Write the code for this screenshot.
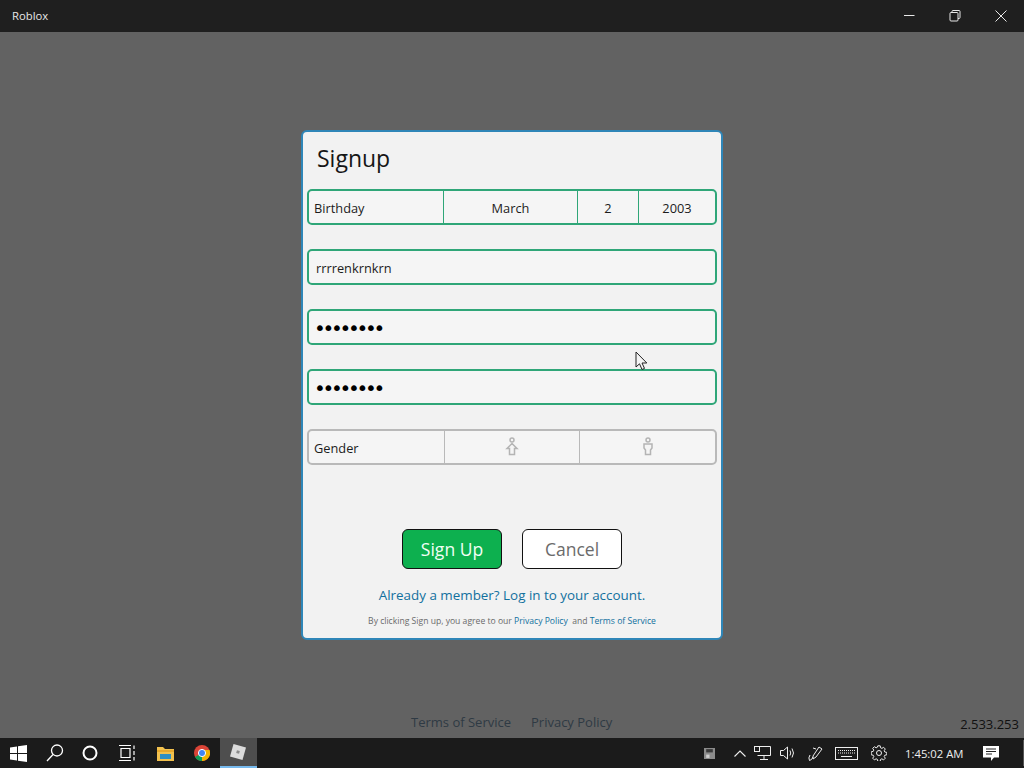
<script>
</script>

<div class="screen">
  <header class="titlebar">
    <span class="app-name">Roblox</span>
    <div class="win-controls">
      <button class="win-btn" aria-label="Minimize">
        <svg width="12" height="12" viewBox="0 0 12 12"><path d="M1 5.5h10.5" stroke="#e8e8e8" fill="none"/></svg>
      </button>
      <button class="win-btn" aria-label="Restore">
        <svg width="12" height="12" viewBox="0 0 12 12"><rect x="1" y="2.5" width="8" height="8.5" rx="1" stroke="#e8e8e8" fill="none"/><path d="M3 2.5V1.5q0-1 1-1h6q1 0 1 1v6q0 1-1 1H9" stroke="#e8e8e8" fill="none"/></svg>
      </button>
      <button class="win-btn" aria-label="Close">
        <svg width="12" height="12" viewBox="0 0 12 12"><path d="M.5.5l11 11M11.500.5l-11 11" stroke="#e8e8e8" fill="none"/></svg>
      </button>
    </div>
  </header>

  <main class="stage">
    <section class="modal">
      <h1>Signup</h1>
      <div class="form">
        <div class="field seg green">
          <div class="label">Birthday</div>
          <div class="cell month">March</div>
          <div class="cell day">2</div>
          <div class="cell year">2003</div>
        </div>
        <div class="field green input">rrrrenkrnkrn</div>
        <div class="field green input dots">••••••••</div>
        <div class="field green input dots">••••••••</div>
        <div class="field seg grey">
          <div class="label gender">Gender</div>
          <div class="cell g1">
            <svg width="14" height="20" viewBox="0 0 14 20" fill="none" stroke="#b4b4b4" stroke-width="1.500"><circle cx="7" cy="3" r="2"/><path d="M7 6.500L12 11.500H9.500V17.500H4.500V11.500H2Z"/></svg>
          </div>
          <div class="cell g2">
            <svg width="14" height="20" viewBox="0 0 14 20" fill="none" stroke="#b4b4b4" stroke-width="1.500"><circle cx="7" cy="3" r="2"/><path d="M3 7H11V11L9.500 13V17.500H4.500V13L3 11Z"/></svg>
          </div>
        </div>
      </div>
      <div class="actions">
        <button class="btn primary">Sign Up</button>
        <button class="btn secondary">Cancel</button>
      </div>
      <a class="member" href="#top">Already a member? Log in to your account.</a>
      <p class="legal">By clicking Sign up, you agree to our <a href="#top">Privacy Policy</a>&nbsp; and <a href="#top">Terms of Service</a></p>
    </section>
    <nav class="foot-links">
      <a href="#top">Terms of Service</a>
      <a href="#top">Privacy Policy</a>
    </nav>
    <span class="version">2.533.253</span>
    <svg class="cursor" width="13" height="20" viewBox="0 0 13 20"><path d="M1 1V16L4.500 12.800L7 18.500L9.500 17.400L7 12H11.800Z" fill="#f4f4f4" stroke="#222" stroke-width="1"/></svg>
  </main>

  <footer class="taskbar">
    <div class="task-left">
      <div class="task-item">
        <svg width="17" height="17" viewBox="0 0 17 17" fill="#fff"><path d="M0 2.500L7 1.500V8H0ZM8 1.300L17 0V8H8ZM0 9H7V15.500L0 14.500ZM8 9H17V17L8 15.700Z"/></svg>
      </div>
      <div class="task-item">
        <svg width="18" height="18" viewBox="0 0 18 18" fill="none" stroke="#fff" stroke-width="1.300"><circle cx="11" cy="6.500" r="5.500"/><path d="M7 10.500L1 17"/></svg>
      </div>
      <div class="task-item cortana">
        <svg width="16" height="16" viewBox="0 0 16 16" fill="none" stroke="#fff" stroke-width="2"><circle cx="8" cy="8" r="6.500"/></svg>
      </div>
      <div class="task-item">
        <svg width="18" height="16" viewBox="0 0 18 16" fill="none" stroke="#fff" stroke-width="1.200"><path d="M0 .5H12M0 15.500H12M2 3.500H11V12.500H2ZM15 .5V4M15 6V10M15 12V15.500" /></svg>
      </div>
      <div class="task-item">
        <svg width="17" height="15" viewBox="0 0 17 15"><path d="M0 1H6L8 3H17V15H0Z" fill="#f2c14e"/><path d="M0 4H17V6H0Z" fill="#e8a92d"/><rect x="3" y="8" width="11" height="5" fill="#2f8fc4"/></svg>
      </div>
      <div class="task-item">
        <svg width="16" height="16" viewBox="0 0 16 16"><circle cx="8" cy="8" r="8" fill="#db4437"/><path d="M8 8L1 12A8 8 0 0 0 8 16Z" fill="#0f9d58"/><path d="M8 8L8 16A8 8 0 0 0 15.500 5H8Z" fill="#f4b400"/><circle cx="8" cy="8" r="3.600" fill="#4285f4" stroke="#fff" stroke-width="1"/></svg>
      </div>
      <div class="task-item active">
        <svg width="16" height="16" viewBox="0 0 16 16"><path d="M3.500 0L16 3.500L12.500 16L0 12.500Z" fill="#dcdcdc"/><rect x="6.500" y="6.500" width="3" height="3" fill="#8a8a8a" transform="rotate(15 8 8)"/></svg>
      </div>
    </div>
    <div class="tray">
      <svg class="t-a" width="11" height="11" viewBox="0 0 10 10"><rect x="0" y="0" width="10" height="10" fill="#8c8c8c"/><rect x="2" y="1" width="6" height="3" fill="#3a3a3a"/><rect x="2" y="6" width="3" height="3" fill="#d0d0d0"/></svg>
      <svg class="t-b" width="12" height="7" viewBox="0 0 12 7" fill="none" stroke="#eee" stroke-width="1.100"><path d="M.5 6.500L6 1L11.500 6.500"/></svg>
      <svg class="t-c" width="17" height="14" viewBox="0 0 17 14" fill="none" stroke="#eee"><path d="M3.500.5H16.500V9.500H3.500M10 9.500V13.500M6 13.500H14"/><rect x=".5" y=".5" width="5" height="5" fill="#1c1c1c"/></svg>
      <svg class="t-d" width="16" height="14" viewBox="0 0 16 14" fill="none" stroke="#eee"><path d="M.5 4.500H3.500L7.500 1V13L3.500 9.500H.5ZM10 4.500Q11.500 7 10 9.500M12 2.500Q15 7 12 11.500"/></svg>
      <svg class="t-e" width="17" height="17" viewBox="0 0 17 17" fill="none" stroke="#eee"><path d="M6 11L12 2L15 4L9 12L6 14ZM3 10Q1 13 2.500 15.500Q5 15 6 12M9 4L6 3"/></svg>
      <svg class="t-f" width="23" height="13" viewBox="0 0 23 13" fill="none" stroke="#eee"><rect x=".5" y=".5" width="22" height="12"/><path d="M3 3.500H20M3 6H20" stroke-dasharray="1 1"/><path d="M6 9.500H17"/></svg>
      <svg class="t-g" width="16" height="16" viewBox="0 0 16 16" fill="none" stroke="#eee"><circle cx="8" cy="8" r="2.500"/><path d="M6.800.8h2.400l.4 2 1.300.6 1.700-1.100 1.700 1.700-1.100 1.700.6 1.300 2 .4v2.400l-2 .4-.6 1.300 1.100 1.700-1.700 1.700-1.700-1.100-1.300.6-.4 2H6.800l-.4-2-1.300-.6-1.700 1.100-1.700-1.700 1.100-1.700-.6-1.300-2-.4V6.800l2-.4.6-1.300L1.700 3.400l1.700-1.700 1.700 1.100 1.300-.6Z"/></svg>
      <span class="clock">1:45:02 AM</span>
      <svg class="t-h" width="16" height="15" viewBox="0 0 16 15"><path d="M0 0H16V11.500H11L8 15V11.500H0Z" fill="#fff"/><path d="M3 3H13M3 5.500H13M3 8H9" stroke="#222" fill="none"/></svg>
      <span class="desk-edge"></span>
    </div>
  </footer>
</div>

<style>
  :global(body) {
    margin: 0;
    background: #626262;
  }
  .screen {
    width: 1024px;
    height: 768px;
    display: flex;
    flex-direction: column;
    overflow: hidden;
    font-family: "Open Sans", "Noto Sans", "Liberation Sans", sans-serif;
  }
  .titlebar {
    height: 32px;
    background: #1f1f1f;
    display: flex;
    align-items: center;
    justify-content: space-between;
    padding-left: 12px;
    padding-bottom: 1px;
    box-sizing: border-box;
    flex: none;
  }
  .app-name {
    color: #e6e6e6;
    font-size: 11.300px;
    font-weight: 500;
  }
  .win-controls {
    display: flex;
  }
  .win-btn {
    width: 46px;
    height: 32px;
    padding: 0;
    border: 0;
    background: none;
    display: flex;
    align-items: center;
    justify-content: center;
  }
  .stage {
    position: relative;
    flex: 1;
    display: flex;
    align-items: center;
    justify-content: center;
    background: #626262;
  }
  .modal {
    box-sizing: border-box;
    width: 422px;
    height: 510px;
    padding: 0 4px;
    background: #f2f2f2;
    border: 2px solid #2f86b8;
    border-radius: 6px;
    display: flex;
    flex-direction: column;
    align-items: stretch;
    color: #111;
  }
  h1 {
    margin: 0;
    height: 57px;
    padding-left: 10px;
    font-size: 23px;
    font-weight: 400;
    line-height: 52px;
    color: #161616;
  }
  .form {
    display: flex;
    flex-direction: column;
    gap: 24px;
  }
  .field {
    box-sizing: border-box;
    height: 36px;
    border-radius: 5px;
    background: #f5f5f5;
    font-size: 12.800px;
    color: #1c1c1c;
  }
  .green {
    border: 2px solid #2fa678;
  }
  .grey {
    border: 2px solid #b9b9b9;
  }
  .seg {
    display: flex;
    align-items: stretch;
  }
  .label {
    width: 134px;
    flex: none;
    display: flex;
    align-items: center;
    padding: 2px 0 0 5px;
    box-sizing: border-box;
  }
  .label.gender {
    width: 135px;
  }
  .cell {
    display: flex;
    align-items: center;
    justify-content: center;
    box-sizing: border-box;
    padding-top: 2px;
    border-left: 1px solid #2fa678;
  }
  .grey .cell {
    border-left-color: #b9b9b9;
    padding-top: 0;
  }
  .month {
    width: 134px;
  }
  .day {
    width: 61px;
  }
  .year {
    flex: 1;
  }
  .g1 {
    width: 135px;
  }
  .g2 {
    flex: 1;
  }
  .input {
    display: flex;
    align-items: center;
    padding: 2px 0 0 7px;
  }
  .dots {
    font-size: 20px;
    color: #000;
    letter-spacing: -3.300px;
    padding: 2px 0 0 5px;
    font-family: "DejaVu Sans", sans-serif;
  }
  .actions {
    display: flex;
    justify-content: center;
    gap: 20px;
    margin-top: 64px;
  }
  .btn {
    box-sizing: border-box;
    width: 100px;
    height: 40px;
    border: 1px solid #111;
    border-radius: 6px;
    font-family: inherit;
    font-size: 17.500px;
    padding: 0;
  }
  .primary {
    background: #0db04f;
    color: #f2fff6;
  }
  .secondary {
    background: #fff;
    color: #6b6b6b;
  }
  .member {
    margin-top: 16px;
    text-align: center;
    color: #11709e;
    font-size: 13.400px;
    line-height: 20px;
    text-decoration: none;
  }
  .legal {
    margin: 8px 0 0;
    text-align: center;
    font-size: 8.600px;
    line-height: 16px;
    color: #6a6a6a;
  }
  .legal a {
    color: #11709e;
    text-decoration: none;
  }
  .foot-links {
    position: absolute;
    left: 411px;
    top: 680px;
    display: flex;
    gap: 20px;
  }
  .foot-links a {
    color: #2f3a44;
    font-size: 13px;
    line-height: 20px;
    text-decoration: none;
  }
  .version {
    position: absolute;
    right: 5px;
    top: 683px;
    font-size: 13px;
    line-height: 18px;
    color: #111;
  }
  .cursor {
    position: absolute;
    left: 635px;
    top: 319px;
  }
  .taskbar {
    height: 30px;
    flex: none;
    background: #1b1b1b;
    display: flex;
    justify-content: space-between;
    align-items: stretch;
  }
  .task-left {
    display: flex;
  }
  .task-item {
    width: 36.700px;
    display: flex;
    align-items: center;
    justify-content: center;
    box-sizing: border-box;
  }
  .cortana {
    padding-right: 4px;
  }
  .task-item.active {
    background: #4e4e4e;
    border-bottom: 2px solid #76b9ed;
  }
  .tray {
    display: flex;
    align-items: center;
    color: #eee;
    position: relative;
    padding-right: 25px;
  }
  .t-b { margin-left: 19px; }
  .t-c { margin-left: 8px; }
  .t-d { margin-left: 9px; }
  .t-e { margin-left: 11px; }
  .t-f { margin-left: 11px; }
  .t-g { margin-left: 13px; }
  .clock {
    margin-left: 18px;
    font-size: 11.300px;
    width: 78px;
  }
  .desk-edge {
    position: absolute;
    right: 0;
    top: 2px;
    bottom: 2px;
    width: 1px;
    background: #555;
  }
</style>
